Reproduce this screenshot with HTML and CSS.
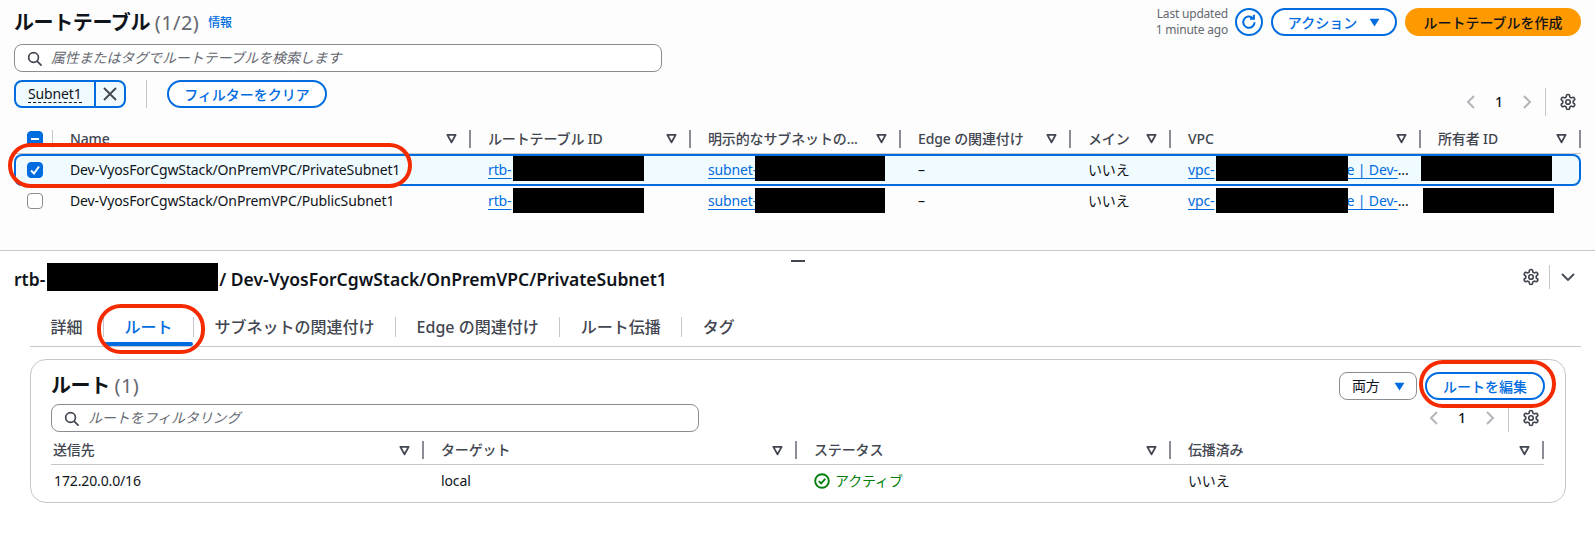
FILE: index.html
```html
<!DOCTYPE html>
<html lang="ja">
<head>
<meta charset="utf-8">
<title>ルートテーブル</title>
<link rel="stylesheet" href="styles.css">
</head>
<body>
<svg class="defs" aria-hidden="true">
  <symbol id="sort" viewBox="0 0 12 12"><path d="M1.5 2h9L6 10.2z" fill="none" stroke="currentColor" stroke-width="2" stroke-linejoin="round"/></symbol>
  <symbol id="caret" viewBox="0 0 12 10"><path d="M.5 .8h11L6 9.5z" fill="currentColor"/></symbol>
  <symbol id="search" viewBox="0 0 16 16"><circle cx="7" cy="7" r="5.2" fill="none" stroke="currentColor" stroke-width="1.8"/><path d="M11 11l4 4" fill="none" stroke="currentColor" stroke-width="1.8" stroke-linecap="round"/></symbol>
  <symbol id="gear" viewBox="0 0 24 24"><path fill="none" stroke="currentColor" stroke-width="2.2" stroke-linejoin="round" d="M12.22 2h-.44a2 2 0 0 0-2 2v.18a2 2 0 0 1-1 1.73l-.43.25a2 2 0 0 1-2 0l-.15-.08a2 2 0 0 0-2.73.73l-.22.38a2 2 0 0 0 .73 2.73l.15.1a2 2 0 0 1 1 1.72v.51a2 2 0 0 1-1 1.74l-.15.09a2 2 0 0 0-.73 2.73l.22.38a2 2 0 0 0 2.73.73l.15-.08a2 2 0 0 1 2 0l.43.25a2 2 0 0 1 1 1.73V20a2 2 0 0 0 2 2h.44a2 2 0 0 0 2-2v-.18a2 2 0 0 1 1-1.73l.43-.25a2 2 0 0 1 2 0l.15.08a2 2 0 0 0 2.73-.73l.22-.39a2 2 0 0 0-.73-2.73l-.15-.08a2 2 0 0 1-1-1.74v-.5a2 2 0 0 1 1-1.74l.15-.09a2 2 0 0 0 .73-2.73l-.22-.38a2 2 0 0 0-2.73-.73l-.15.08a2 2 0 0 1-2 0l-.43-.25a2 2 0 0 1-1-1.73V4a2 2 0 0 0-2-2z"/><circle cx="12" cy="12" r="3" fill="none" stroke="currentColor" stroke-width="2.2"/></symbol>
  <symbol id="prev" viewBox="0 0 16 16"><path d="M11 2L5 8l6 6" fill="none" stroke="currentColor" stroke-width="2"/></symbol>
  <symbol id="next" viewBox="0 0 16 16"><path d="M5 2l6 6-6 6" fill="none" stroke="currentColor" stroke-width="2"/></symbol>
</svg>

<section class="top">
  <header class="page-head">
    <div class="title-wrap">
      <h1 class="h1">ルートテーブル <span class="count">(1/2)</span></h1>
      <a class="info">情報</a>
    </div>
    <div class="actions">
      <div class="updated">Last updated<br>1 minute ago</div>
      <button class="round-btn" aria-label="更新">
        <svg class="refresh" viewBox="0 0 16 16"><path d="M13.6 8.2a5.7 5.7 0 1 1-1.9-4.3" fill="none" stroke="currentColor" stroke-width="2"/><path d="M12.9 .8v3.9H9" fill="none" stroke="currentColor" stroke-width="2"/></svg>
      </button>
      <button class="btn btn-actions">アクション<svg class="caret"><use href="#caret"/></svg></button>
      <button class="btn-primary">ルートテーブルを作成</button>
    </div>
  </header>

  <div class="searchbox searchbox-top">
    <svg class="search-icon"><use href="#search"/></svg>
    <span class="placeholder">属性またはタグでルートテーブルを検索します</span>
  </div>

  <div class="toolbar">
    <div class="filters">
      <div class="token">
        <span class="token-label"><span class="token-text">Subnet1</span></span>
        <span class="token-x"><svg class="x-icon" viewBox="0 0 16 16"><path d="M2 2l12 12M14 2L2 14" fill="none" stroke="currentColor" stroke-width="1.8"/></svg></span>
      </div>
      <span class="filter-sep"></span>
      <button class="btn btn-clear">フィルターをクリア</button>
    </div>
    <div class="pager">
      <svg class="pg-arrow"><use href="#prev"/></svg>
      <span class="pg-num">1</span>
      <svg class="pg-arrow"><use href="#next"/></svg>
      <span class="pg-sep"></span>
      <svg class="gear"><use href="#gear"/></svg>
    </div>
  </div>

  <div class="grid8 thead">
    <div class="th th-check"><span class="cb cb-mixed"><i class="dash"></i></span><i class="sep sep-light"></i></div>
    <div class="th"><span>Name</span><svg class="sort"><use href="#sort"/></svg><i class="sep"></i></div>
    <div class="th"><span>ルートテーブル ID</span><svg class="sort"><use href="#sort"/></svg><i class="sep"></i></div>
    <div class="th"><span>明示的なサブネットの...</span><svg class="sort"><use href="#sort"/></svg><i class="sep"></i></div>
    <div class="th"><span>Edge の関連付け</span><svg class="sort"><use href="#sort"/></svg><i class="sep"></i></div>
    <div class="th"><span>メイン</span><svg class="sort"><use href="#sort"/></svg><i class="sep"></i></div>
    <div class="th"><span>VPC</span><svg class="sort"><use href="#sort"/></svg><i class="sep"></i></div>
    <div class="th"><span>所有者 ID</span><svg class="sort"><use href="#sort"/></svg><i class="sep"></i></div>
  </div>

  <div class="grid8 row row-selected">
    <div class="td td-check"><span class="cb cb-on"><svg class="tick" viewBox="0 0 12 12"><path d="M2 6.5l3 3L10 2.5" fill="none" stroke="#fff" stroke-width="2"/></svg></span></div>
    <div class="td">Dev-VyosForCgwStack/OnPremVPC/PrivateSubnet1</div>
    <div class="td"><a class="link">rtb-</a><span class="redact r-rtb"></span></div>
    <div class="td"><a class="link">subnet-</a><span class="redact r-subnet"></span></div>
    <div class="td">–</div>
    <div class="td">いいえ</div>
    <div class="td"><a class="link">vpc-<span class="filler"></span>e | Dev-</a>...<span class="redact r-vpc"></span></div>
    <div class="td"><span class="redact r-owner"></span></div>
  </div>
  <div class="grid8 row row-plain">
    <div class="td td-check"><span class="cb"></span></div>
    <div class="td">Dev-VyosForCgwStack/OnPremVPC/PublicSubnet1</div>
    <div class="td"><a class="link">rtb-</a><span class="redact r-rtb"></span></div>
    <div class="td"><a class="link">subnet-</a><span class="redact r-subnet"></span></div>
    <div class="td">–</div>
    <div class="td">いいえ</div>
    <div class="td"><a class="link">vpc-<span class="filler"></span>e | Dev-</a>...<span class="redact r-vpc"></span></div>
    <div class="td"><span class="redact r-owner r-owner2"></span></div>
  </div>
</section>

<section class="detail">
  <span class="handle"></span>
  <div class="detail-head">
    <h2 class="h2">rtb-<span class="redact-inline"></span>/ Dev-VyosForCgwStack/OnPremVPC/PrivateSubnet1</h2>
    <div class="detail-tools">
      <svg class="gear"><use href="#gear"/></svg>
      <span class="pg-sep pg-sep-short"></span>
      <svg class="chev" viewBox="0 0 16 16"><path d="M2 5l6 6 6-6" fill="none" stroke="currentColor" stroke-width="1.8"/></svg>
    </div>
  </div>

  <nav class="tabs">
    <span class="tab">詳細</span><i class="tab-sep"></i>
    <span class="tab tab-active">ルート</span><i class="tab-sep"></i>
    <span class="tab">サブネットの関連付け</span><i class="tab-sep"></i>
    <span class="tab">Edge の関連付け</span><i class="tab-sep"></i>
    <span class="tab">ルート伝播</span><i class="tab-sep"></i>
    <span class="tab">タグ</span>
  </nav>

  <div class="card">
    <div class="card-head">
      <h3 class="h3">ルート <span class="count">(1)</span></h3>
      <div class="card-actions">
        <div class="select">両方<svg class="caret"><use href="#caret"/></svg></div>
        <button class="btn btn-edit">ルートを編集</button>
      </div>
    </div>
    <div class="card-tools">
      <div class="searchbox">
        <svg class="search-icon"><use href="#search"/></svg>
        <span class="placeholder">ルートをフィルタリング</span>
      </div>
      <div class="pager">
        <svg class="pg-arrow"><use href="#prev"/></svg>
        <span class="pg-num">1</span>
        <svg class="pg-arrow"><use href="#next"/></svg>
        <span class="pg-sep"></span>
        <svg class="gear"><use href="#gear"/></svg>
      </div>
    </div>
    <div class="grid4 thead thead-sub">
      <div class="th th-first"><span>送信先</span><svg class="sort"><use href="#sort"/></svg><i class="sep"></i></div>
      <div class="th"><span>ターゲット</span><svg class="sort"><use href="#sort"/></svg><i class="sep"></i></div>
      <div class="th"><span>ステータス</span><svg class="sort"><use href="#sort"/></svg><i class="sep"></i></div>
      <div class="th"><span>伝播済み</span><svg class="sort"><use href="#sort"/></svg><i class="sep"></i></div>
    </div>
    <div class="grid4 row-sub">
      <div class="td td-first">172.20.0.0/16</div>
      <div class="td">local</div>
      <div class="td td-status"><svg class="ok" viewBox="0 0 16 16"><circle cx="8" cy="8" r="6.8" fill="none" stroke="currentColor" stroke-width="1.9"/><path d="M4.8 8.2l2.3 2.3 4.2-4.6" fill="none" stroke="currentColor" stroke-width="1.9"/></svg>アクティブ</div>
      <div class="td">いいえ</div>
    </div>
  </div>
</section>

<span class="mark mark-row"></span>
<span class="mark mark-tab"></span>
<span class="mark mark-edit"></span>
</body>
</html>
```

FILE: styles.css
```css
* { box-sizing: border-box; }
html, body { margin: 0; padding: 0; }
body {
  position: relative;
  width: 1595px;
  height: 535px;
  overflow: hidden;
  background: #fff;
  color: #0f141a;
  font-family: "Noto Sans", "Noto Sans CJK JP", sans-serif;
  font-size: 14px;
  line-height: 20px;
  letter-spacing: -.13px;
}
.defs { position: absolute; width: 0; height: 0; }
button { font-family: inherit; cursor: pointer; padding: 0; letter-spacing: 0; }
a { color: inherit; }

.top {
  height: 250px;
  padding: 8px 14px 0;
  background: #fdfdfd;
}
.page-head { display: flex; justify-content: space-between; height: 28px; }
.title-wrap { display: flex; align-items: center; gap: 9px; padding-top: 2px; }
.h1 { margin: 0; font-size: 20px; line-height: 28px; font-weight: 600; letter-spacing: -.4px; }
.count { font-weight: 400; color: #656871; letter-spacing: .4px; }
.info { color: #006ce0; font-size: 12px; font-weight: 500; }
.actions { display: flex; align-items: center; }
.updated { color: #656871; font-size: 12px; line-height: 16px; text-align: right; margin-right: 7px; letter-spacing: -.2px; }
.round-btn {
  width: 28px; height: 28px; border: 2px solid #006ce0; border-radius: 50%;
  background: #fff; color: #006ce0; display: flex; align-items: center; justify-content: center;
  margin-right: 8px;
}
.refresh { width: 16px; height: 16px; }
.btn {
  height: 28px; border: 2px solid #006ce0; border-radius: 14px; background: #fff;
  color: #006ce0; font-size: 14px; font-weight: 500; display: inline-flex; align-items: center; justify-content: center;
}
.btn-actions { width: 126px; margin-right: 8px; gap: 12px; }
.caret { width: 11px; height: 9px; color: #006ce0; }
.btn-primary {
  width: 176px; height: 28px; border: 0; border-radius: 14px; background: #ff9900;
  color: #0f141a; font-size: 14px; font-weight: 500;
}

.searchbox {
  width: 648px; height: 28px; border: 1px solid #8c8c94; border-radius: 8px;
  background: #fff; display: flex; align-items: center; padding-left: 12px; gap: 9px;
}
.searchbox-top { margin-top: 8px; }
.search-icon { width: 15px; height: 15px; color: #424650; }
.placeholder { color: #656871; font-style: italic; }

.toolbar { display: flex; justify-content: space-between; height: 36px; margin-top: 8px; }
.filters { display: flex; align-items: flex-start; }
.token {
  display: flex; width: 112px; height: 28px; border: 2px solid #006ce0; border-radius: 8px; background: #f0fbff;
}
.token-label { width: 80px; border-right: 2px solid #006ce0; padding-left: 12px; display: flex; align-items: center; }
.token-text { border-bottom: 1px dashed #0f141a; line-height: 17px; }
.token-x { flex: 1; display: flex; align-items: center; justify-content: center; color: #424650; }
.x-icon { width: 16px; height: 16px; }
.filter-sep { width: 1px; height: 28px; background: #c6c6cd; margin: 0 20px; }
.btn-clear { width: 160px; }

.pager { display: flex; align-items: center; height: 28px; align-self: flex-end; color: #0f141a; }
.pg-arrow { width: 16px; height: 16px; color: #b4b4bb; }
.pg-num { width: 12px; margin: 0 14px; text-align: center; font-weight: 500; }
.pg-sep { width: 1px; height: 28px; background: #c6c6cd; margin: 0 13px 0 10px; }
.gear { width: 18px; height: 18px; color: #424650; margin-right: 4px; }

.grid8 { display: grid; grid-template-columns: 39px 418px 220px 210px 170px 100px 250px 160px; }
.grid4 { display: grid; grid-template-columns: 373px 373px 374px 373px; }

.thead { margin-top: 8px; height: 30px; border-bottom: 1px solid #c6c6cd; }
.th {
  display: flex; align-items: center; padding-left: 17px; color: #424650; font-weight: 500; min-width: 0;
}
.th span { white-space: nowrap; }
.th-check { padding-left: 13px; justify-content: space-between; }
.th-first { padding-left: 2px; }
.sort { width: 11px; height: 11px; margin-left: auto; margin-right: 12px; color: #424650; }
.sep { width: 2px; height: 18px; background: #8c8c94; }
.sep-light { width: 1px; background: #c6c6cd; }

.cb { display: flex; width: 16px; height: 16px; border: 1px solid #8c8c94; border-radius: 4px; background: #fff; align-items: center; justify-content: center; }
.cb-mixed, .cb-on { background: #006ce0; border-color: #006ce0; }
.dash { width: 8px; height: 2px; background: #fff; }
.tick { width: 12px; height: 12px; }

.row { align-items: center; }
.row-selected { height: 32px; background: #f0fbff; border-radius: 8px; box-shadow: inset 0 0 0 2px #006ce0; }
.row-plain { height: 30px; }
.td { position: relative; display: flex; align-items: center; height: 100%; padding-left: 17px; white-space: nowrap; }
.td-check { padding-left: 13px; }
.link { color: #006ce0; text-decoration: underline; text-underline-offset: 3px; }
.filler { display: inline-block; width: 132px; height: 1px; }
.redact { position: absolute; top: 2px; height: 25px; background: #000; }
.r-rtb { left: 42px; width: 131px; }
.r-subnet { left: 64px; width: 130px; }
.r-vpc { left: 45px; width: 132px; }
.r-owner { left: 0; width: 131px; }
.r-owner2 { left: 2px; }

.detail { position: relative; height: 285px; border-top: 1px solid #c6c6cd; padding: 12px 14px 0; background: #fff; }
.handle { position: absolute; left: 791px; top: 9px; width: 14px; height: 2px; background: #424650; }
.detail-head { display: flex; justify-content: space-between; align-items: center; height: 28px; }
.h2 { margin: 0; display: flex; align-items: flex-start; height: 28px; font-size: 17.5px; line-height: 32px; font-weight: 600; letter-spacing: 0; }
.redact-inline { display: block; width: 171px; height: 28px; background: #000; margin: 0 1px 0 2px; }
.detail-tools { display: flex; align-items: center; color: #424650; }
.pg-sep-short { height: 24px; margin: 0 10px 0 5px; }
.chev { width: 16px; height: 16px; margin-right: 5px; color: #424650; }

.tabs { display: flex; align-items: center; height: 39px; margin: 17px 0 0 16px; border-bottom: 1px solid #c6c6cd; }
.tab { position: relative; display: flex; align-items: center; height: 38px; padding: 0 20.5px; color: #424650; font-size: 16px; font-weight: 500; letter-spacing: 0; }
.tab-active { color: #006ce0; }
.tab-active::after { content: ""; position: absolute; left: 0; right: 0; bottom: 0; height: 4px; border-radius: 2px; background: #006ce0; }
.tab-sep { width: 1px; height: 20px; background: #c6c6cd; }

.card { width: 1536px; height: 144px; margin: 12px 0 0 16px; padding: 12px 21px 0 20px; border: 1px solid #c6c6cd; border-radius: 16px; background: #fff; }
.card-head { display: flex; justify-content: space-between; height: 28px; }
.h3 { margin: 0; font-size: 20px; line-height: 28px; font-weight: 600; letter-spacing: -.4px; }
.card-actions { display: flex; gap: 8px; margin-right: -1px; }
.select { display: flex; align-items: center; justify-content: space-between; width: 78px; height: 28px; padding: 0 11px 0 12px; border: 1px solid #8c8c94; border-radius: 8px; color: #0f141a; }
.btn-edit { width: 120px; }
.card-tools { display: flex; justify-content: space-between; margin-top: 4px; height: 28px; }
.thead-sub { margin-top: 4px; height: 29px; }
.row-sub { height: 31px; align-items: center; }
.td-first { padding-left: 3px; }
.td-status { color: #037f0c; gap: 5px; }
.ok { width: 16px; height: 16px; }

.mark { position: absolute; border: 4px solid #f52b00; pointer-events: none; }
.mark-row { left: 8px; top: 143px; width: 404px; height: 45px; border-radius: 23px; }
.mark-tab { left: 97px; top: 304px; width: 108px; height: 50px; border-radius: 24px; }
.mark-edit { left: 1419px; top: 360px; width: 137px; height: 48px; border-radius: 24px; }
```
